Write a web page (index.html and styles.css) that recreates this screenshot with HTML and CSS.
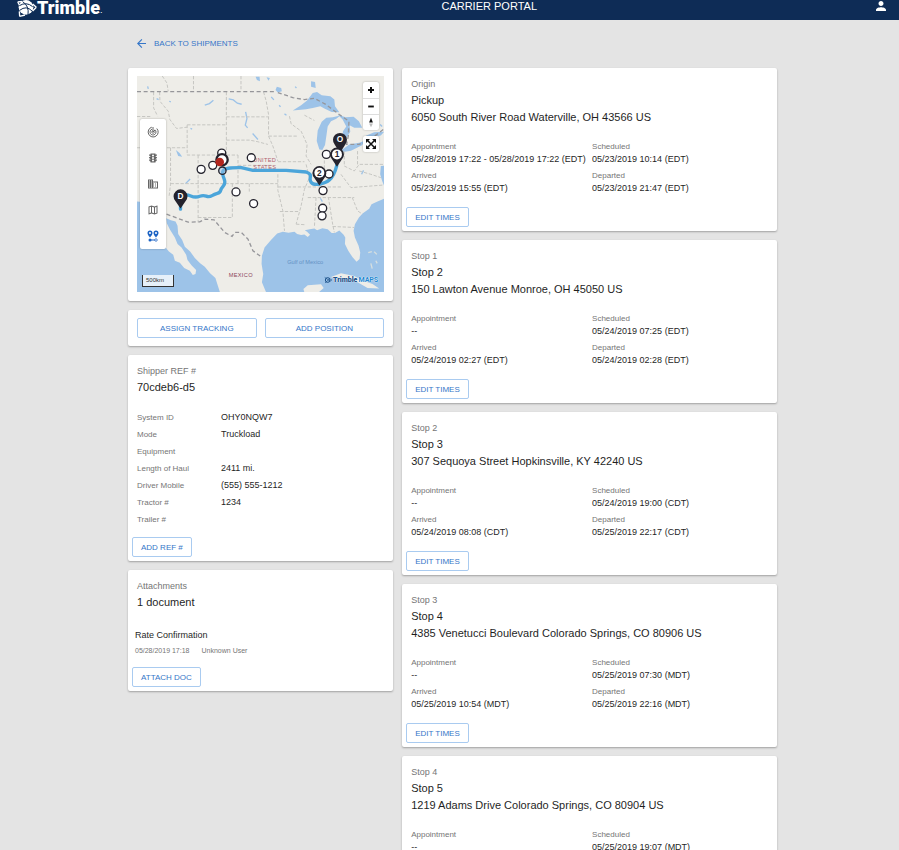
FILE: index.html
```html
<!DOCTYPE html>
<html lang="en">
<head>
    <meta charset="UTF-8">
    <meta name="viewport" content="width=device-width, initial-scale=1.0">
    <title>Carrier Portal</title>
    <link rel="stylesheet" href="styles.css">
</head>
<body>
    <header class="topbar">
        <a href="#" class="logo">
            <svg class="logo-globe" viewBox="0 0 60 51" aria-hidden="true">
                <circle cx="27" cy="22" r="22" fill="#fff"/>
                <path d="M2 6 L16 4 M2 6 L10 20 M8 49 L7 34 M8 49 L24 45 M58 22 L47 12 M58 22 L47 33" stroke="#fff" stroke-width="4" fill="none"/>
                <path d="M7 17 Q28 4 47 20 M8 31 Q28 15 45 33 M17 5 Q37 18 33 44" stroke="#0e2c56" stroke-width="3" fill="none"/>
            </svg>
            <span class="logo-text">Trimble</span><span class="logo-dot">.</span>
        </a>
        <span class="portal-title">CARRIER PORTAL</span>
        <button type="button" class="user-btn" aria-label="Account">
            <svg viewBox="4 4 16 16"><path d="M12 12c2.200 0 4-1.800 4-4s-1.800-4-4-4-4 1.800-4 4 1.800 4 4 4zm0 2c-2.700 0-8 1.300-8 4v2h16v-2c0-2.700-5.300-4-8-4z"/></svg>
        </button>
    </header>

    <main class="page">
        <a href="#" class="back-link">
            <svg viewBox="4 4 16 16"><path d="M20 11H7.800l5.600-5.600L12 4l-8 8 8 8 1.400-1.400L7.800 13H20z"/></svg>
            BACK TO SHIPMENTS
        </a>

        <div class="columns">
            <div class="side">
                <section class="card map-card">
                    <div class="map">
                        <svg class="map-canvas" viewBox="36 34 744 651" role="img" aria-label="Shipment route map">
                            <rect x="36" y="34" width="744" height="651" fill="#eeede8"/>
                            <!-- water -->
                            <g fill="#9dc3e8">
                                <path d="M36 412 60 414 90 440 100 490 118 545 132 562 145 572 150 590 165 596 178 612 195 620 204 633 212 630 214 618 200 604 188 588 184 572 170 550 158 540 150 520 135 496 126 478 124 462 138 468 152 472 158 485 160 510 172 528 180 548 196 562 210 582 226 598 240 608 256 628 272 642 286 686 36 686Z"/>
                                <path d="M425 686 412 655 416 630 411 600 412 575 420 550 440 527 458 508 475 503 492 506 510 503 518 510 530 513 540 511 550 519 557 512 548 503 541 498 556 495 570 493 578 498 594 492 610 495 622 507 632 507 645 499 658 512 663 520 662 540 672 560 685 580 697 593 706 585 708 565 703 545 692 520 688 500 692 480 704 460 715 448 735 434 742 420 760 412 780 403 780 686Z"/>
                                <path d="M505 138 530 122 548 108 565 85 578 82 592 92 618 95 630 105 632 125 645 143 622 142 600 132 588 125 565 130 545 134Z"/>
                                <path d="M585 255 577 230 580 198 592 172 606 160 625 158 648 153 636 163 620 170 610 186 606 215 602 242 594 257Z"/>
                                <path d="M640 150 664 158 688 157 704 170 714 190 690 190 676 182 678 202 667 220 655 218 656 200 666 186 655 165Z"/>
                                <path d="M652 257 675 240 705 235 728 227 712 243 680 259 658 263Z"/>
                                <path d="M725 214 750 203 780 202 770 213 735 219Z"/>
                                <path d="M457 66 470 70 472 80 460 84 453 76ZM560 50 572 52 574 70 560 66ZM393 36 405 36 406 50 397 46ZM426 38 436 40 432 48ZM153 257 164 266 172 277 160 275ZM770 305 780 304 780 365 774 350 768 330Z"/>
                            </g>
                            <!-- islands -->
                            <path d="M537 675 550 664 590 661 598 672 582 686 540 686ZM618 640 650 628 690 636 715 650 745 660 765 674 730 672 700 655 660 642Z" fill="#eeede8"/>
                            <path d="M732 566 743 563M750 563l8 8M740 598l4 16M755 590l4 8" stroke="#d6dfdf" stroke-width="4" fill="none"/>
                            <path d="M240 122l14-5 12-10M312 103l14 3 12 10 13 3M363 142l4 20-5 20 7 8M384 207l16 18M182 358l14-14M95 102l6 3M133 110l5 2M197 192l5 2M68 65l2 8M440 97l8 9M464 122l4 5M480 148l6 4M512 66l4 4M588 402l6 10M730 120l4 18M750 150l10 8M768 180l6 6M712 330l6-12" stroke="#9dc3e8" stroke-width="4" fill="none"/>
                            <!-- state lines -->
                            <g fill="none" stroke="#c6c6c2" stroke-width="3" stroke-dasharray="10 5">
                                <path d="M86 82V130L98 155M104 82 105 110 130 140 135 165 155 192 187 188M112 34 126 55 130 80M206 34V80M349 34V80M305 82V272M305 157H430M305 227H375L400 232 430 240M187 181H305M187 181V272H340M36 156H80M36 250H187M137 250V360L132 400M220 272V475M137 358H460M340 272V358M323 358V460H220M340 303H440M374 358V382M460 330V378L475 440 480 500"/>
                                <path d="M417 82 425 110 432 150 432 215 445 245 460 290M432 215H520M460 292H540M495 155 500 178 530 200 548 240 545 275 560 300M540 152 570 168M460 368H650M545 300 555 340 540 375 530 425 515 480M466 442H523M515 480 545 482M575 400 570 490M612 398 625 480 630 505M625 487 690 490M550 400H690M600 258V325M600 258H650M660 260V305L690 320 705 300 780 300M700 260V300M650 330 680 370 780 362M684 400 700 440 715 450M705 320 740 330 770 340"/>
                            </g>
                            <!-- country borders -->
                            <g fill="none" stroke="#96969a" stroke-width="4" stroke-dasharray="12 8">
                                <path d="M36 81H455"/>
                                <path d="M460 84 505 99 540 105 570 101 605 120 645 150 674 170 672 215 667 240 705 240 755 212 780 193"/>
                                <path d="M125 450 190 474 225 473 240 465 268 467 300 505 322 517 330 505 350 505 370 525 385 560 408 577"/>
                            </g>
                            <!-- place names -->
                            <g font-family="Liberation Sans, Arial, sans-serif" font-size="17">
                                <text x="386" y="294" fill="#b0606e" letter-spacing="1">UNITED</text>
                                <text x="386" y="314" fill="#b0606e" letter-spacing="1">STATES</text>
                                <text x="312" y="640" fill="#8c4459" letter-spacing="1">MEXICO</text>
                                <text x="488" y="599" fill="#6390c4">Gulf of Mexico</text>
                            </g>
                            <!-- route -->
                            <path d="M167 435 C166 415 172 392 185 392 S205 404 225 396 S245 404 262 394 S285 390 288 378 S303 365 300 350 S292 335 294 322 S325 310 350 310 L385 318H485L545 323 C570 332 550 340 560 354 S605 356 615 347 S632 325 637 305 L638 285 647 260" fill="none" stroke="#4ba5da" stroke-width="10" stroke-linejoin="round" stroke-linecap="round"/>
                            <!-- reported positions -->
                            <g fill="#fff" stroke="#24232d" stroke-width="4">
                                <circle cx="229" cy="315" r="12"/>
                                <circle cx="264" cy="303" r="12"/>
                                <circle cx="291" cy="266" r="12"/>
                                <circle cx="380" cy="280" r="12"/>
                                <circle cx="606" cy="270" r="12"/>
                                <circle cx="614" cy="329" r="12"/>
                                <circle cx="596" cy="379" r="12"/>
                                <circle cx="595" cy="432" r="12"/>
                                <circle cx="593" cy="455" r="12"/>
                                <circle cx="334" cy="383" r="12"/>
                                <circle cx="387" cy="418" r="12"/>
                                <circle cx="292" cy="286" r="17" stroke-width="7"/>
                                <circle cx="293" cy="319" r="11" fill="#9dc3e8" fill-opacity=".5"/>
                            </g>
                            <circle cx="285" cy="293" r="13" fill="#b3261e"/>
                            <!-- stop pins -->
                            <g fill="#24232d">
                                <path d="M647 266 631 240A21 21 0 1 1 663 240Z"/>
                                <path d="M638 307 624 286A21 21 0 1 1 652 286Z"/>
                                <path d="M585 364 570 341A21 21 0 1 1 600 341Z"/>
                                <path d="M167 433 152 411A21 21 0 1 1 182 411Z"/>
                            </g>
                            <g fill="#fff">
                                <circle cx="638" cy="270" r="15"/>
                                <circle cx="585" cy="325" r="15"/>
                            </g>
                            <g font-family="Liberation Sans, Arial, sans-serif" font-size="25" font-weight="bold" text-anchor="middle">
                                <text x="647" y="234" fill="#fff">O</text>
                                <text x="638" y="279" fill="#24232d">1</text>
                                <text x="585" y="334" fill="#24232d">2</text>
                                <text x="167" y="404" fill="#fff">D</text>
                            </g>
                        </svg>

                        <div class="layers">
                            <button type="button" aria-label="Radar"><svg viewBox="0 0 24 24"><path d="M12 2v10M12 12l4-4M19.500 5a10 10 0 1 1-10-2.600M16 7.500a6 6 0 1 1-6-1.200M14.500 11a2.500 2.500 0 1 1-3-1.500" fill="none" stroke="currentColor" stroke-width="2"/></svg></button>
                            <button type="button" aria-label="Traffic"><svg viewBox="0 0 24 24"><path fill-rule="evenodd" d="M20 10h-3V8.900c1.700-.5 3-2 3-3.900h-3V3H7v2H4c0 1.900 1.300 3.400 3 3.900V10H4c0 1.900 1.300 3.400 3 3.900V15H4c0 1.900 1.300 3.400 3 3.900V21h10v-2.100c1.700-.5 3-2 3-3.900h-3v-1.100c1.700-.5 3-2 3-3.900zM12 5a2 2 0 1 1 0 4 2 2 0 0 1 0-4zm0 5a2 2 0 1 1 0 4 2 2 0 0 1 0-4zm0 5a2 2 0 1 1 0 4 2 2 0 0 1 0-4z"/></svg></button>
                            <button type="button" aria-label="Places"><svg viewBox="0 0 24 24"><path fill-rule="evenodd" d="M12 7V3H2v18h20V7H12zM6 19H4v-2h2v2zm0-4H4v-2h2v2zm0-4H4V9h2v2zm0-4H4V5h2v2zm4 12H8v-2h2v2zm0-4H8v-2h2v2zm0-4H8V9h2v2zm0-4H8V5h2v2zm10 12h-8v-2h2v-2h-2v-2h2v-2h-2V9h8v10zm-2-8h-2v2h2v-2zm0 4h-2v2h2v-2z"/></svg></button>
                            <button type="button" aria-label="Map style"><svg viewBox="0 0 24 24"><path fill-rule="evenodd" d="M20.500 3l-.2 0L15 5.100 9 3 3.400 4.900 3 5.400V20.500l.5.500L9 18.900l6 2.100 5.600-1.900.4-.5V3.500zM10 5.500l4 1.400v11.600l-4-1.400zM5 6.500l3-1v11.700l-3 1.100zM19 17.500l-3 1V6.900l3-1.200z"/></svg></button>
                            <button type="button" class="active" aria-label="Route"><svg viewBox="0 0 24 24"><path fill-rule="evenodd" d="M6 1a5 5 0 0 0-5 5c0 4 5 9 5 9s5-5 5-9a5 5 0 0 0-5-5zm0 3a2 2 0 1 1 0 4 2 2 0 0 1 0-4zM18 1a5 5 0 0 0-5 5c0 4 5 9 5 9s5-5 5-9a5 5 0 0 0-5-5zm0 3a2 2 0 1 1 0 4 2 2 0 0 1 0-4z"/><circle cx="6" cy="20" r="3"/><circle cx="18" cy="20" r="2.500" fill="none" stroke="currentColor" stroke-width="1.500"/><path d="M8 19h8v2H8z"/></svg></button>
                        </div>

                        <div class="zoom-group">
                            <button type="button" aria-label="Zoom in"><svg viewBox="0 0 16 16"><path d="M8 5v6M5 8h6" stroke="#111" stroke-width="2"/></svg></button>
                            <button type="button" aria-label="Zoom out"><svg viewBox="0 0 16 16"><path d="M5 8h6" stroke="#111" stroke-width="2"/></svg></button>
                            <button type="button" aria-label="Reset north"><svg viewBox="0 0 16 16"><path d="M8 3l2 5H6z" fill="#111"/><path d="M8 13l2-4H6z" fill="#bbb"/></svg></button>
                        </div>
                        <div class="full-group">
                            <button type="button" aria-label="Fullscreen"><svg viewBox="0 0 16 16"><path d="M4 4l8 8M12 4l-8 8" stroke="#111" stroke-width="1.500"/><path d="M3 3h4L3 7zM13 3v4L9 3zM13 13H9l4-4zM3 13V9l4 4z" fill="#111"/></svg></button>
                        </div>

                        <div class="scale">500km</div>
                        <div class="map-brand">
                            <svg viewBox="0 0 24 24"><circle cx="11" cy="12" r="7" fill="none" stroke="#1b5189" stroke-width="3"/><path d="M2 4l17 12M3 21L18 7M19 8l4 4-4 4" fill="none" stroke="#1b5189" stroke-width="2"/></svg>
                            <b>Trimble</b> <span>MAPS</span>
                        </div>
                    </div>
                </section>

                <section class="card map-actions">
                    <button type="button" class="btn">ASSIGN TRACKING</button>
                    <button type="button" class="btn">ADD POSITION</button>
                </section>

                <section class="card">
                    <p class="overline">Shipper REF #</p>
                    <h2>70cdeb6-d5</h2>
                    <dl class="details">
                        <dt>System ID</dt><dd>OHY0NQW7</dd>
                        <dt>Mode</dt><dd>Truckload</dd>
                        <dt>Equipment</dt><dd></dd>
                        <dt>Length of Haul</dt><dd>2411 mi.</dd>
                        <dt>Driver Mobile</dt><dd>(555) 555-1212</dd>
                        <dt>Tractor #</dt><dd>1234</dd>
                        <dt>Trailer #</dt><dd></dd>
                    </dl>
                    <button type="button" class="btn card-btn">ADD REF #</button>
                </section>

                <section class="card">
                    <p class="overline">Attachments</p>
                    <h2>1 document</h2>
                    <div class="document">
                        <p class="document-name">Rate Confirmation</p>
                        <p class="document-meta"><span>05/28/2019 17:18</span><span>Unknown User</span></p>
                    </div>
                    <button type="button" class="btn card-btn">ATTACH DOC</button>
                </section>
            </div>

            <div class="stops">
                <section class="card">
                    <p class="overline">Origin</p>
                    <h2>Pickup</h2>
                    <p class="address">6050 South River Road Waterville, OH 43566 US</p>
                    <dl class="times">
                        <div><dt>Appointment</dt><dd>05/28/2019 17:22 - 05/28/2019 17:22 (EDT)</dd></div>
                        <div><dt>Scheduled</dt><dd>05/23/2019 10:14 (EDT)</dd></div>
                        <div><dt>Arrived</dt><dd>05/23/2019 15:55 (EDT)</dd></div>
                        <div><dt>Departed</dt><dd>05/23/2019 21:47 (EDT)</dd></div>
                    </dl>
                    <button type="button" class="btn card-btn">EDIT TIMES</button>
                </section>

                <section class="card">
                    <p class="overline">Stop 1</p>
                    <h2>Stop 2</h2>
                    <p class="address">150 Lawton Avenue Monroe, OH 45050 US</p>
                    <dl class="times">
                        <div><dt>Appointment</dt><dd>--</dd></div>
                        <div><dt>Scheduled</dt><dd>05/24/2019 07:25 (EDT)</dd></div>
                        <div><dt>Arrived</dt><dd>05/24/2019 02:27 (EDT)</dd></div>
                        <div><dt>Departed</dt><dd>05/24/2019 02:28 (EDT)</dd></div>
                    </dl>
                    <button type="button" class="btn card-btn">EDIT TIMES</button>
                </section>

                <section class="card">
                    <p class="overline">Stop 2</p>
                    <h2>Stop 3</h2>
                    <p class="address">307 Sequoya Street Hopkinsville, KY 42240 US</p>
                    <dl class="times">
                        <div><dt>Appointment</dt><dd>--</dd></div>
                        <div><dt>Scheduled</dt><dd>05/24/2019 19:00 (CDT)</dd></div>
                        <div><dt>Arrived</dt><dd>05/24/2019 08:08 (CDT)</dd></div>
                        <div><dt>Departed</dt><dd>05/25/2019 22:17 (CDT)</dd></div>
                    </dl>
                    <button type="button" class="btn card-btn">EDIT TIMES</button>
                </section>

                <section class="card">
                    <p class="overline">Stop 3</p>
                    <h2>Stop 4</h2>
                    <p class="address">4385 Venetucci Boulevard Colorado Springs, CO 80906 US</p>
                    <dl class="times">
                        <div><dt>Appointment</dt><dd>--</dd></div>
                        <div><dt>Scheduled</dt><dd>05/25/2019 07:30 (MDT)</dd></div>
                        <div><dt>Arrived</dt><dd>05/25/2019 10:54 (MDT)</dd></div>
                        <div><dt>Departed</dt><dd>05/25/2019 22:16 (MDT)</dd></div>
                    </dl>
                    <button type="button" class="btn card-btn">EDIT TIMES</button>
                </section>

                <section class="card">
                    <p class="overline">Stop 4</p>
                    <h2>Stop 5</h2>
                    <p class="address">1219 Adams Drive Colorado Springs, CO 80904 US</p>
                    <dl class="times">
                        <div><dt>Appointment</dt><dd>--</dd></div>
                        <div><dt>Scheduled</dt><dd>05/25/2019 19:07 (MDT)</dd></div>
                    </dl>
                </section>
            </div>
        </div>
    </main>
</body>
</html>
```

FILE: styles.css
```css
* {
    box-sizing: border-box;
}
html {
    scrollbar-width: none;
}
body {
    margin: 0;
    font-family: "Liberation Sans", Arial, sans-serif;
    font-size: 9px;
    color: #1f1f1f;
    background-color: #e4e4e4;
}
p, h2, dl, dd {
    margin: 0;
}
button {
    font-family: inherit;
    cursor: pointer;
}

/* top bar */
.topbar {
    height: 20px;
    padding: 0 13px 0 17px;
    display: flex;
    align-items: flex-start;
    justify-content: space-between;
    background-color: #0e2c56;
    color: #fff;
}
.logo {
    display: flex;
    align-items: flex-start;
    color: #fff;
    text-decoration: none;
}
.logo-globe {
    width: 20px;
    height: 17px;
}
.logo-text {
    font-family: Roboto, "Liberation Sans", sans-serif;
    font-size: 18px;
    line-height: 16px;
    font-weight: 900;
}
.logo-dot {
    line-height: 20px;
}
.portal-title {
    font-size: 11px;
    line-height: 12px;
}
.user-btn {
    padding: 1px 0 0;
    border: none;
    background: none;
}
.user-btn svg {
    display: block;
    width: 10px;
    height: 10px;
    fill: #fff;
}

/* page */
.page {
    padding: 0 122px 9px 128px;
}
.back-link {
    display: flex;
    align-items: center;
    gap: 8px;
    height: 48px;
    padding: 0 0 2px 9px;
    font-size: 8px;
    color: #3576c8;
    text-decoration: none;
}
.back-link svg {
    width: 9px;
    height: 9px;
    fill: currentColor;
}
.columns {
    display: grid;
    grid-template-columns: repeat(12, 1fr);
    gap: 9px;
    align-items: start;
}
.side, .stops {
    display: flex;
    flex-direction: column;
    gap: 9px;
}
.side {
    grid-column: span 5;
}
.stops {
    grid-column: span 7;
}

/* cards */
.card {
    padding: 8px 9px 4px;
    background-color: #fff;
    border-radius: 2px;
    box-shadow: 0 1px 2px rgba(0, 0, 0, 0.3);
}
.overline {
    font-size: 9px;
    line-height: 16px;
    color: #757575;
}
h2, .address {
    font-size: 11px;
    line-height: 17px;
    font-weight: normal;
}
.btn {
    height: 20px;
    padding: 0 8px;
    font-size: 8px;
    color: #3576c8;
    background-color: #fff;
    border: 1px solid #a9cbf0;
    border-radius: 2px;
}
.card-btn {
    display: block;
    margin-left: -5px;
}
.times {
    display: grid;
    grid-template-columns: 1fr 1fr;
    gap: 5px;
    margin: 15px 0 13px;
    line-height: 12px;
    white-space: nowrap;
}
.times dt {
    font-size: 8px;
    color: #757575;
}
.details {
    display: grid;
    grid-template-columns: 84px 1fr;
    margin: 13px 0 9px;
    line-height: 17px;
}
.details dt {
    font-size: 8px;
    color: #757575;
}
.document {
    margin: 16px 0 9px -2px;
}
.document-name {
    line-height: 16px;
}
.document-meta {
    display: flex;
    gap: 12px;
    font-size: 7px;
    line-height: 15px;
    color: #757575;
}
.map-actions {
    display: grid;
    grid-template-columns: 1fr 1fr;
    gap: 8px;
    padding-bottom: 8px;
}

/* map */
.map-card {
    padding-bottom: 9px;
}
.map {
    position: relative;
}
.map-canvas {
    display: block;
    width: 100%;
}
.layers, .zoom-group, .full-group {
    position: absolute;
    background-color: #fff;
    border-radius: 2px;
    box-shadow: 0 0 2px rgba(0, 0, 0, 0.3);
}
.layers {
    top: 43px;
    left: 3px;
}
.layers button {
    display: flex;
    align-items: center;
    justify-content: center;
    width: 26px;
    height: 26px;
    padding: 0;
    border: none;
    background: none;
    color: #666;
}
.layers .active {
    color: #1c63c4;
}
.layers svg {
    width: 12px;
    height: 12px;
    fill: currentColor;
}
.zoom-group {
    top: 6px;
    right: 5px;
}
.full-group {
    top: 60px;
    right: 5px;
}
.zoom-group button, .full-group button {
    display: block;
    width: 16px;
    height: 16px;
    padding: 0;
    border: none;
    background: none;
}
.zoom-group button + button {
    border-top: 1px solid #ddd;
}
.zoom-group svg, .full-group svg {
    display: block;
    width: 100%;
    height: 100%;
}
.scale {
    position: absolute;
    left: 5px;
    bottom: 5px;
    width: 32px;
    padding: 0 3px;
    font-size: 6px;
    line-height: 11px;
    color: #333;
    background-color: rgba(255, 255, 255, 0.75);
    border: 1px solid #333;
    border-top: none;
}
.map-brand {
    position: absolute;
    right: 6px;
    bottom: 7px;
    display: flex;
    align-items: center;
    gap: 1px;
    font-family: Roboto, "Liberation Sans", sans-serif;
    font-size: 7px;
    line-height: 10px;
    color: #1b5189;
    text-shadow: 0 0 1px #fff, 0 0 1px #fff;
}
.map-brand svg {
    width: 8px;
    height: 8px;
}
.map-brand b {
    font-weight: 900;
}
.map-brand span {
    font-weight: bold;
    color: #2488d0;
}
```
